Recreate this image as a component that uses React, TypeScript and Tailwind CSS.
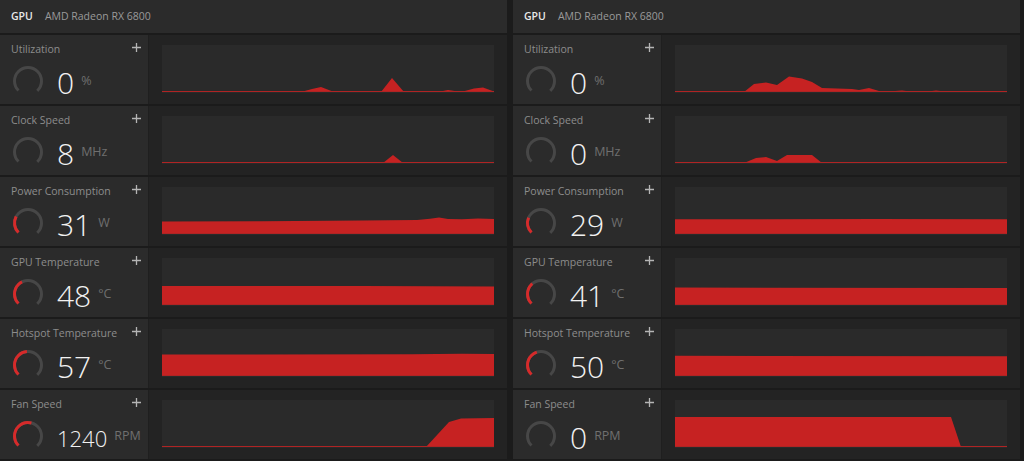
import React from "react";

type Pt = [number, number];

type Metric = {
  label: string;
  value: string;
  unit: string;
  frac: number;
  small?: boolean;
  // top edge of the filled area, chart box is 332 x 48, baseline at 47
  area: Pt[];
};

const BASE = 47;

// heights above baseline -> points
const h = (pts: Pt[]): Pt[] => pts.map(([x, v]) => [x, BASE - v] as Pt);

const left: Metric[] = [
  {
    label: "Utilization",
    value: "0",
    unit: "%",
    frac: 0,
    area: h([
      [0, 0], [99, 0], [110, 0.8], [136, 0.8], [139, 0], [150, 3], [159, 5], [172, 0],
      [219, 0], [230, 14], [242, 0], [276, 0], [286, 2], [296, 0.5], [301, 0.5],
      [312, 3.5], [321, 4.5], [332, 0.5],
    ]),
  },
  {
    label: "Clock Speed",
    value: "8",
    unit: "MHz",
    frac: 0,
    area: h([[0, 0], [221, 0], [231, 8], [241, 0], [300, 0.5], [332, 0]]),
  },
  {
    label: "Power Consumption",
    value: "31",
    unit: "W",
    frac: 0.27,
    area: [
      [0, 34.5], [100, 34.3], [200, 33.6], [255, 33], [268, 31.8], [277, 30.6], [286, 32],
      [300, 32.2], [316, 31.6], [332, 32],
    ],
  },
  {
    label: "GPU Temperature",
    value: "48",
    unit: "°C",
    frac: 0.4,
    area: [[0, 28], [200, 28], [332, 28.4]],
  },
  {
    label: "Hotspot Temperature",
    value: "57",
    unit: "°C",
    frac: 0.48,
    area: [[0, 25.6], [250, 25.2], [300, 24.8], [332, 25]],
  },
  {
    label: "Fan Speed",
    value: "1240",
    unit: "RPM",
    frac: 0.55,
    small: true,
    area: [[0, BASE], [264, BASE], [287, 22], [299, 18.5], [332, 18]],
  },
];

const right: Metric[] = [
  {
    label: "Utilization",
    value: "0",
    unit: "%",
    frac: 0,
    area: h([
      [0, 0], [69, 0], [79, 8], [91, 9.5], [102, 7], [114, 15.5], [127, 13.5], [137, 10],
      [147, 4], [177, 3], [184, 2], [194, 4], [204, 1], [220, 1], [227, 1.6], [235, 0.6],
      [255, 0.8], [261, 1.5], [270, 0.5], [274, 0], [332, 0],
    ]),
  },
  {
    label: "Clock Speed",
    value: "0",
    unit: "MHz",
    frac: 0,
    area: h([[0, 0], [69, 0], [81, 5], [91, 6], [102, 2], [112, 8], [137, 8], [147, 0], [332, 0]]),
  },
  {
    label: "Power Consumption",
    value: "29",
    unit: "W",
    frac: 0.25,
    area: [[0, 32.3], [200, 32], [332, 32.2]],
  },
  {
    label: "GPU Temperature",
    value: "41",
    unit: "°C",
    frac: 0.35,
    area: [[0, 29.5], [332, 30]],
  },
  {
    label: "Hotspot Temperature",
    value: "50",
    unit: "°C",
    frac: 0.43,
    area: [[0, 26.8], [332, 27.2]],
  },
  {
    label: "Fan Speed",
    value: "0",
    unit: "RPM",
    frac: 0,
    area: [[0, 17], [276, 17], [286, BASE], [332, BASE]],
  },
];

function Gauge({ frac }: { frac: number }) {
  const r = 13.5;
  const c = 2 * Math.PI * r;
  return (
    <svg width="32" height="32" viewBox="0 0 32 32" className="shrink-0">
      <g transform="rotate(135 16 16)">
        <circle cx="16" cy="16" r={r} fill="none" stroke="#474747" strokeWidth="3" strokeDasharray={`${c * 0.75} ${c}`} />
        {frac > 0 && (
          <circle cx="16" cy="16" r={r} fill="none" stroke="#d62a2a" strokeWidth="3" strokeDasharray={`${c * 0.75 * frac} ${c}`} />
        )}
      </g>
    </svg>
  );
}

function Chart({ area }: { area: Pt[] }) {
  const pts = [[0, BASE], ...area, [332, BASE]].map((p) => p.join(",")).join(" ");
  return (
    <svg width="332" height="48" viewBox="0 0 332 48" className="block bg-[#2a2a2a]">
      <polygon points={pts} fill="#c62222" />
      <rect x="0" y="46" width="332" height="1" fill="#b02424" />
    </svg>
  );
}

function Row({ m }: { m: Metric }) {
  return (
    <div className="flex h-[69px]">
      <div className="w-[149px] bg-[#2b2b2b] pl-[11px] pr-[7px] pt-[7px] border-r border-[#1f1f1f]">
        <div className="flex items-start justify-between h-[17px]">
          <span className="text-[10.5px] leading-[15px] text-[#8d8d8d]">{m.label}</span>
          <svg width="9" height="9" viewBox="0 0 9 9" className="mt-[1px]">
            <path d="M4.5 0v9M0 4.5h9" stroke="#b5b5b5" strokeWidth="1.3" />
          </svg>
        </div>
        <div className="flex items-center mt-[6px] h-[32px] pl-[1px]">
          <Gauge frac={m.frac} />
          <span
            className={`ml-[13px] font-light text-[#f2f2f2] ${m.small ? "text-[22px] mt-[3px]" : "text-[30px] mt-[4px]"} leading-none`}
          >
            {m.value}
          </span>
          <span className="ml-[7px] text-[12.5px] text-[#6f6f6f] mt-[1px]">{m.unit}</span>
        </div>
      </div>
      <div className="flex-1 bg-[#232323] px-[13px] pt-[10px]">
        <Chart area={m.area} />
      </div>
    </div>
  );
}

function Panel({ metrics }: { metrics: Metric[] }) {
  return (
    <div className="w-[507px] flex flex-col gap-[2px]">
      <div className="h-[33px] bg-[#2b2b2b] flex items-center pl-[11px] text-[10.5px]">
        <span className="font-semibold text-[#e8e8e8]">GPU</span>
        <span className="ml-[12px] text-[#9a9a9a]">AMD Radeon RX 6800</span>
      </div>
      {metrics.map((m) => (
        <Row key={m.label} m={m} />
      ))}
    </div>
  );
}

export default function App() {
  return (
    <div className="w-[1024px] h-[461px] bg-[#1b1b1b] flex gap-[6px] overflow-hidden font-['Open_Sans',sans-serif]">
      <Panel metrics={left} />
      <Panel metrics={right} />
    </div>
  );
}
